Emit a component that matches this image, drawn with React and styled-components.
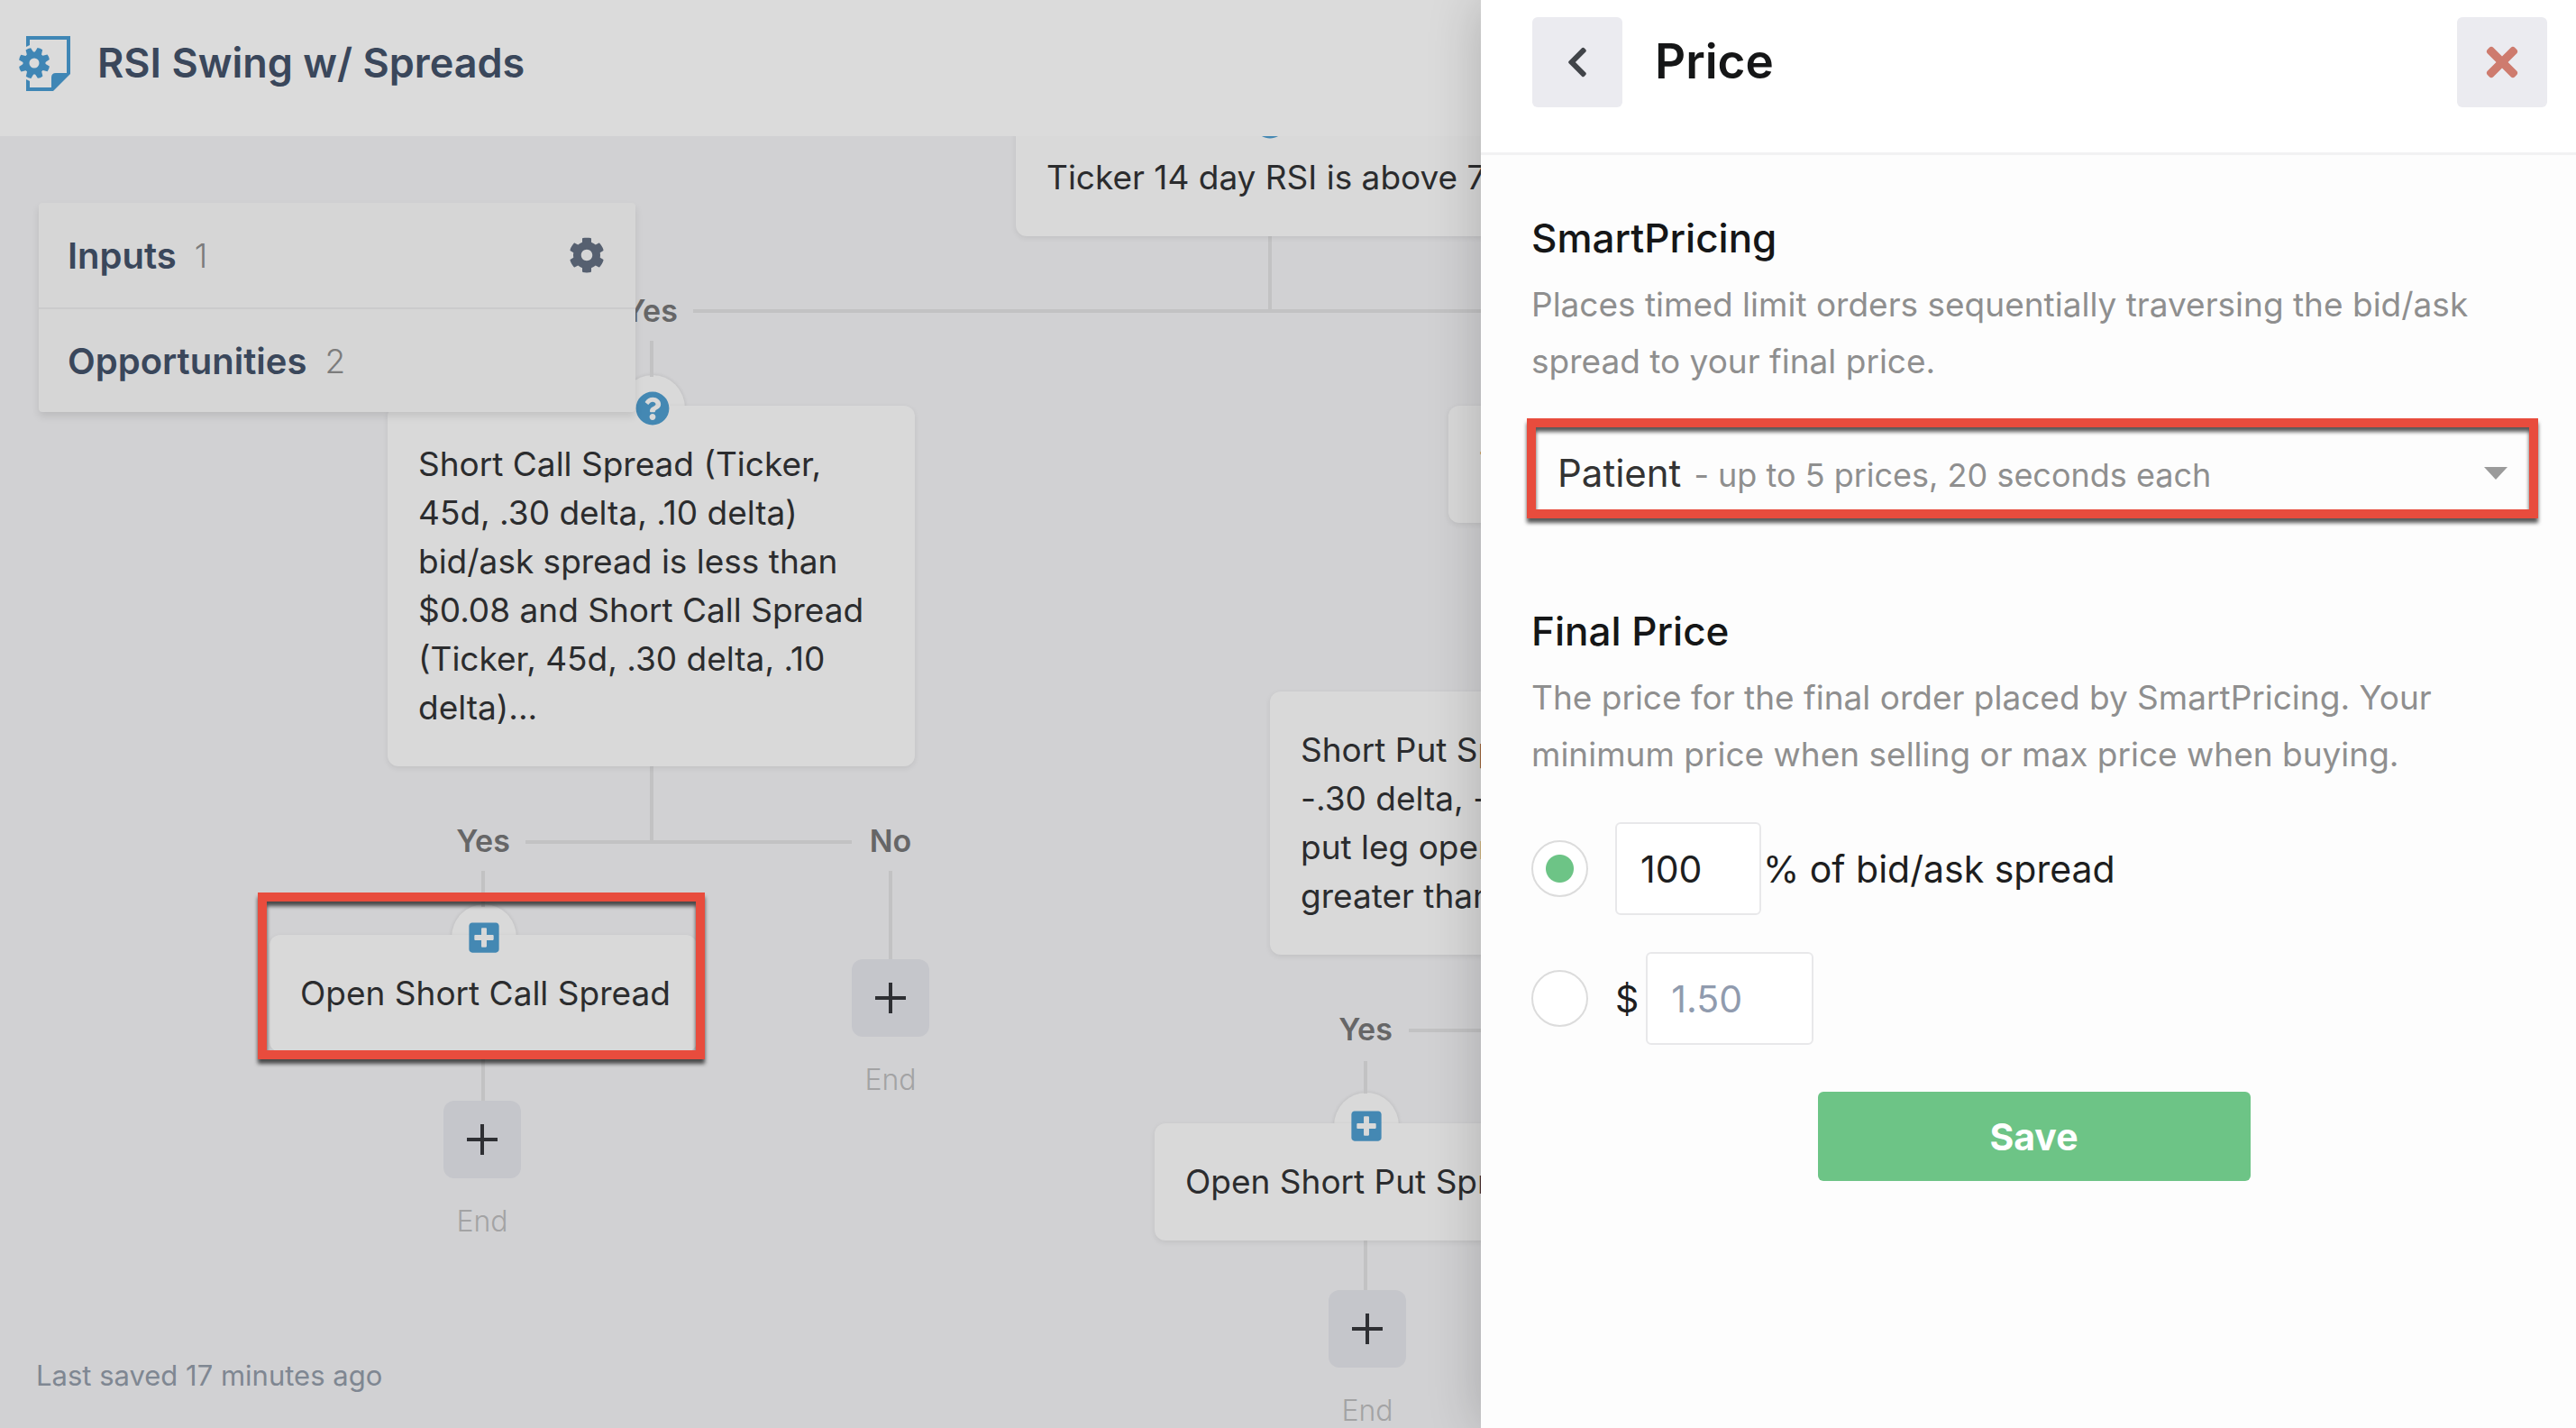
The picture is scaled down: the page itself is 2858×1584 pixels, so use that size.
import { useState } from 'react';
import styled, { createGlobalStyle } from 'styled-components';
import {
  FaChevronLeft,
  FaCog,
  FaPlusSquare,
  FaQuestionCircle,
  FaTimes,
} from 'react-icons/fa';

const GlobalStyle = createGlobalStyle`
  * {
    box-sizing: border-box;
  }

  body {
    margin: 0;
    background: #d1d1d3;
    font-family: Inter, "Liberation Sans", sans-serif;
    font-size: 37px;
    color: #2b2c2e;
  }

  h1, h2, h3, p {
    margin: 0;
  }

  button, input, select {
    font: inherit;
    color: inherit;
  }
`;

const Page = styled.div`
  display: flex;
  min-height: 100vh;
`;

const Main = styled.main`
  flex: 1;
  min-width: 0;
  display: flex;
  flex-direction: column;
`;

const Header = styled.header`
  height: 151px;
  padding: 0 20px 12px;
  display: flex;
  align-items: center;
  gap: 28px;
  background: #dbdbdb;
`;

const BotTitle = styled.h1`
  font-size: 45px;
  font-weight: 600;
  color: #3a475b;
  white-space: nowrap;
`;

const Canvas = styled.section`
  flex: 1;
  position: relative;
  overflow: hidden;
  isolation: isolate;
`;

const Summary = styled.div`
  position: absolute;
  top: 74px;
  left: 43px;
  z-index: 1;
  width: 662px;
  background: #d6d6d6;
  border-radius: 4px;
  box-shadow: 0 5px 8px rgba(0, 0, 0, .1);
`;

const SummaryRow = styled.div`
  height: 116px;
  padding: 0 34px 0 32px;
  display: flex;
  align-items: center;
  gap: 20px;

  & + & {
    border-top: 2px solid #cbcbcc;
  }
`;

const SummaryTitle = styled.h2`
  font-size: 40px;
  font-weight: 600;
  color: #3a475b;
`;

const Count = styled.span`
  font-weight: 300;
  color: #7c7c7c;
`;

const SettingsButton = styled.button`
  margin-left: auto;
  padding: 0;
  display: flex;
  border: 0;
  background: none;
  font-size: 40px;
  color: #566070;
`;

const Line = styled.div`
  position: absolute;
  top: ${({ $y }) => $y}px;
  left: ${({ $x }) => $x}px;
  width: ${({ $length, $vertical }) => ($vertical ? 4 : $length)}px;
  height: ${({ $length, $vertical }) => ($vertical ? $length : 4)}px;
  background: #c2c2c3;
`;

const BranchLabel = styled.span`
  position: absolute;
  top: ${({ $y }) => $y}px;
  left: ${({ $x }) => $x}px;
  width: 100px;
  line-height: 44px;
  font-size: 34px;
  font-weight: 600;
  text-align: center;
  color: #666667;
`;

const NodeCard = styled.article`
  position: absolute;
  top: ${({ $y }) => $y}px;
  left: ${({ $x }) => $x}px;
  width: ${({ $width }) => $width}px;
  padding: 38px 34px;
  border-radius: 12px;
  background: #d9d9d9;
  box-shadow: 0 2px 6px rgba(0, 0, 0, .08);
  line-height: 54px;
  white-space: pre;
`;

const Badge = styled.span`
  position: absolute;
  top: -34px;
  left: calc(50% - 35px);
  width: 72px;
  height: 74px;
  display: flex;
  align-items: center;
  justify-content: center;
  font-size: 38px;
  color: #4488b3;

  &::before {
    content: "";
    position: absolute;
    inset: 0;
    z-index: -1;
    border-radius: 50%;
    background: #d9d9d9;
    box-shadow: 0 0 4px rgba(0, 0, 0, .12);
  }
`;

const EndStep = styled.div`
  position: absolute;
  top: ${({ $y }) => $y}px;
  left: ${({ $x }) => $x}px;
  width: 86px;
  display: flex;
  flex-direction: column;
  align-items: center;
  gap: 26px;
  font-size: 32px;
  font-weight: 300;
  line-height: 44px;
  color: #a3a3a4;
`;

const AddButton = styled.button`
  width: 86px;
  height: 86px;
  padding: 0;
  display: flex;
  align-items: center;
  justify-content: center;
  border: 0;
  border-radius: 12px;
  background: #c5c6cb;
  color: #2e2f33;
`;

const SavedNote = styled.p`
  position: absolute;
  bottom: 36px;
  left: 40px;
  font-size: 31px;
  line-height: 44px;
  color: #7f8792;
`;

const Drawer = styled.aside`
  position: relative;
  z-index: 1;
  width: 1215px;
  background: #fdfdfd;
  box-shadow: 0 0 56px rgba(0, 0, 0, .2);
`;

const DrawerHeader = styled.header`
  height: 172px;
  padding: 19px 32px 0 57px;
  display: flex;
  align-items: flex-start;
  gap: 36px;
  border-bottom: 3px solid #f2f2f3;
  background: #fff;
`;

const DrawerTitle = styled.h2`
  flex: 1;
  line-height: 98px;
  font-size: 53px;
  font-weight: 600;
  color: #151617;
`;

const IconButton = styled.button`
  width: 100px;
  height: 100px;
  padding: 0;
  display: flex;
  align-items: center;
  justify-content: center;
  border: 0;
  border-radius: 6px;
  background: #ebebf0;
  font-size: ${({ $danger }) => ($danger ? 50 : 38)}px;
  color: ${({ $danger }) => ($danger ? '#ce7b6e' : '#414449')};
`;

const Form = styled.form`
  padding: 62px 44px 64px 56px;
  display: flex;
  flex-direction: column;
`;

const SectionTitle = styled.h3`
  line-height: 60px;
  font-size: 44px;
  font-weight: 500;
  color: #151617;
`;

const Hint = styled.p`
  margin-top: 12px;
  line-height: 63px;
  color: #8f8f8f;
`;

// Red call-out frame with its hard shadow
const frame = `
  border: 10px solid #e84c3d;
  filter: drop-shadow(0 5px 2px rgba(0, 0, 0, .65));
`;

const Highlight = styled.div`
  position: absolute;
  top: ${({ $y }) => $y}px;
  left: ${({ $x }) => $x}px;
  width: 496px;
  height: 185px;
  ${frame}
`;

const SpeedField = styled.div`
  position: relative;
  height: 111px;
  margin: 32px -2px 95px -5px;
  padding: 10px 34px 0;
  display: flex;
  align-items: center;
  justify-content: space-between;

  &::before {
    content: "";
    position: absolute;
    inset: 0;
    ${frame}
  }
`;

const SpeedName = styled.span`
  font-size: 42px;
  color: #333;
`;

const SpeedDetail = styled.span`
  margin-left: 14px;
  font-size: 36px;
  color: #8f8f8f;
`;

const SpeedSelect = styled.select`
  position: absolute;
  inset: 0;
  width: 100%;
  height: 100%;
  opacity: 0;
`;

const Options = styled.div`
  margin-top: 44px;
  display: flex;
  flex-direction: column;
  gap: 41px;
`;

const Option = styled.div`
  height: 103px;
  display: flex;
  align-items: center;
  font-size: 41px;
  color: #1d1e20;
`;

const Radio = styled.input`
  appearance: none;
  width: 63px;
  height: 63px;
  margin: 0 30px 0 0;
  border: 2px solid #dcdcdc;
  border-radius: 50%;
  background: #fff;

  &:checked {
    background: radial-gradient(circle, #6dc486 15px, #fff 16px);
  }
`;

const AmountInput = styled.input`
  width: ${({ $wide }) => ($wide ? 186 : 162)}px;
  height: 103px;
  padding: 0 26px;
  border: 2px solid #e8e8ea;
  border-radius: 6px;
  background: #fff;
  color: #1d1e20;

  &::placeholder {
    color: #909bae;
    opacity: 1;
  }
`;

const Unit = styled.label`
  margin: ${({ $before }) => ($before ? '0 8px 0 0' : '0 0 0 2px')};
`;

const SaveButton = styled.button`
  align-self: center;
  width: 480px;
  height: 99px;
  margin-top: 52px;
  border: 0;
  border-radius: 6px;
  background: #6dc486;
  font-size: 41px;
  font-weight: 700;
  color: #fff;
`;

const nodes = [
  {
    x: 1127, y: -19, width: 562, icon: 'question', text: 'Ticker 14 day RSI is above 70',
  },
  {
    x: 430,
    y: 299,
    width: 585,
    icon: 'question',
    text: 'Short Call Spread (Ticker,\n45d, .30 delta, .10 delta)\nbid/ask spread is less than\n$0.08 and Short Call Spread\n(Ticker, 45d, .30 delta, .10\ndelta)...',
  },
  {
    x: 1607, y: 299, width: 585, text: 'Ticker',
  },
  {
    x: 299, y: 886, width: 474, icon: 'plus', text: 'Open Short Call Spread',
  },
  {
    x: 1409,
    y: 616,
    width: 585,
    text: 'Short Put Spread\n-.30 delta, -.10\nput leg open\ngreater than',
  },
  {
    x: 1281, y: 1095, width: 468, icon: 'plus', text: 'Open Short Put Spread',
  },
];

const lines = [
  { x: 1407, y: 111, length: 82, vertical: true },
  { x: 769, y: 192, length: 900 },
  { x: 721, y: 227, length: 40, vertical: true },
  { x: 721, y: 699, length: 84, vertical: true },
  { x: 583, y: 781, length: 362 },
  { x: 534, y: 815, length: 40, vertical: true },
  { x: 986, y: 815, length: 98, vertical: true },
  { x: 534, y: 1016, length: 55, vertical: true },
  { x: 1563, y: 990, length: 200 },
  { x: 1513, y: 1026, length: 36, vertical: true },
  { x: 1513, y: 1225, length: 55, vertical: true },
];

const labels = [
  { x: 672, y: 172, text: 'Yes' },
  { x: 486, y: 760, text: 'Yes' },
  { x: 938, y: 760, text: 'No' },
  { x: 1465, y: 969, text: 'Yes' },
];

const ends = [
  { x: 945, y: 913 },
  { x: 492, y: 1070 },
  { x: 1474, y: 1280 },
];

const speeds = [
  { name: 'Fast', detail: '- up to 3 prices, 5 seconds each' },
  { name: 'Normal', detail: '- up to 4 prices, 10 seconds each' },
  { name: 'Patient', detail: '- up to 5 prices, 20 seconds each' },
];

const teeth = [0, 45, 90, 135, 180, 225, 270, 315];

function BotLogo() {
  return (
    <svg width="60" height="64" viewBox="0 0 60 64" fill="#3f86b5" aria-hidden="true">
      <path d="M9 2H58V44L39 63H9V50L13 52V59H37V48Q37 43 42 43H54V6H13V12L9 14Z" />
      {teeth.map((angle) => (
        <path
          key={angle}
          d="M14 21L15 15Q18 14 21 15L22 21Z"
          transform={`rotate(${angle + 22} 18 32)`}
        />
      ))}
      <circle cx="18" cy="32" r="9" fill="none" stroke="#3f86b5" strokeWidth="7" />
    </svg>
  );
}

function PlusIcon() {
  return (
    <svg width="34" height="34" viewBox="0 0 34 34" aria-hidden="true">
      <path d="M17 0V34M0 17H34" stroke="currentColor" strokeWidth="4" />
    </svg>
  );
}

function FlowNode({ node }) {
  return (
    <NodeCard $x={node.x} $y={node.y} $width={node.width}>
      {node.text}
      {node.icon && (
        <Badge>
          {node.icon === 'plus' ? <FaPlusSquare /> : <FaQuestionCircle />}
        </Badge>
      )}
    </NodeCard>
  );
}

function Flow() {
  return (
    <Canvas>
      {lines.map(({
        x, y, length, vertical,
      }) => (
        <Line
          key={`${x}-${y}`}
          $x={x}
          $y={y}
          $length={length}
          $vertical={vertical}
        />
      ))}
      {labels.map(({ x, y, text }) => (
        <BranchLabel key={`${x}-${y}`} $x={x} $y={y}>{text}</BranchLabel>
      ))}
      {nodes.map((node) => (
        <FlowNode key={`${node.x}-${node.y}`} node={node} />
      ))}
      {ends.map(({ x, y }) => (
        <EndStep key={`${x}-${y}`} $x={x} $y={y}>
          <AddButton type="button" aria-label="Add step">
            <PlusIcon />
          </AddButton>
          End
        </EndStep>
      ))}
      <Highlight $x={286} $y={839} />
      <Summary>
        <SummaryRow>
          <SummaryTitle>Inputs</SummaryTitle>
          <Count>1</Count>
          <SettingsButton type="button" aria-label="Settings">
            <FaCog />
          </SettingsButton>
        </SummaryRow>
        <SummaryRow>
          <SummaryTitle>Opportunities</SummaryTitle>
          <Count>2</Count>
        </SummaryRow>
      </Summary>
      <SavedNote>Last saved 17 minutes ago</SavedNote>
    </Canvas>
  );
}

function PriceDrawer() {
  const [speed, setSpeed] = useState('Patient');
  const [mode, setMode] = useState('percent');
  const [percent, setPercent] = useState('100');
  const [amount, setAmount] = useState('');

  const selected = speeds.find(({ name }) => name === speed);

  return (
    <Drawer>
      <DrawerHeader>
        <IconButton type="button" aria-label="Back">
          <FaChevronLeft />
        </IconButton>
        <DrawerTitle>Price</DrawerTitle>
        <IconButton type="button" aria-label="Close" $danger>
          <FaTimes />
        </IconButton>
      </DrawerHeader>
      <Form onSubmit={(event) => event.preventDefault()}>
        <SectionTitle as="label" htmlFor="speed">SmartPricing</SectionTitle>
        <Hint>
          Places timed limit orders sequentially traversing the bid/ask
          spread to your final price.
        </Hint>
        <SpeedField>
          <div>
            <SpeedName>{selected.name}</SpeedName>
            <SpeedDetail>{selected.detail}</SpeedDetail>
          </div>
          <svg width="26" height="14" viewBox="0 0 26 14" aria-hidden="true">
            <path d="M0 0H26L13 14Z" fill="#9b9b9b" />
          </svg>
          <SpeedSelect
            id="speed"
            value={speed}
            onChange={(event) => setSpeed(event.target.value)}
          >
            {speeds.map(({ name }) => (
              <option key={name} value={name}>{name}</option>
            ))}
          </SpeedSelect>
        </SpeedField>
        <SectionTitle>Final Price</SectionTitle>
        <Hint>
          The price for the final order placed by SmartPricing. Your
          minimum price when selling or max price when buying.
        </Hint>
        <Options>
          <Option>
            <Radio
              type="radio"
              name="mode"
              aria-label="Percent of bid/ask spread"
              checked={mode === 'percent'}
              onChange={() => setMode('percent')}
            />
            <AmountInput
              id="percent"
              value={percent}
              onChange={(event) => setPercent(event.target.value)}
            />
            <Unit htmlFor="percent">% of bid/ask spread</Unit>
          </Option>
          <Option>
            <Radio
              type="radio"
              name="mode"
              aria-label="Dollar amount"
              checked={mode === 'amount'}
              onChange={() => setMode('amount')}
            />
            <Unit htmlFor="amount" $before>$</Unit>
            <AmountInput
              id="amount"
              placeholder="1.50"
              value={amount}
              onChange={(event) => setAmount(event.target.value)}
              $wide
            />
          </Option>
        </Options>
        <SaveButton type="submit">Save</SaveButton>
      </Form>
    </Drawer>
  );
}

export default function App() {
  return (
    <>
      <GlobalStyle />
      <Page>
        <Main>
          <Header>
            <BotLogo />
            <BotTitle>RSI Swing w/ Spreads</BotTitle>
          </Header>
          <Flow />
        </Main>
        <PriceDrawer />
      </Page>
    </>
  );
}
